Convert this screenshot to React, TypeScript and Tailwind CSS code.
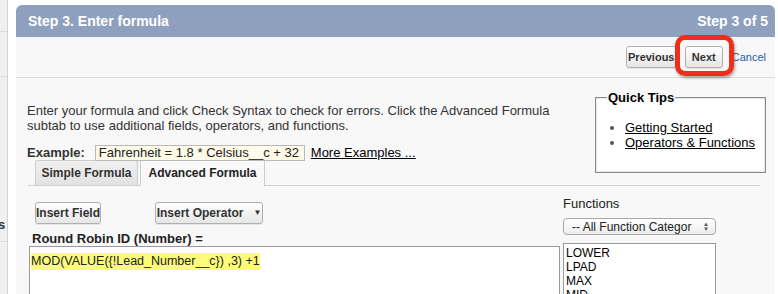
const FONT = "font-['Liberation_Sans',Arial,Helvetica,sans-serif]"

function LeftRail() {
  return (
    <div className="flex w-2 shrink-0 flex-col border-r border-[#d3d3d3] bg-[#f0f0f0]">
      <div className="h-[32px] border-b border-[#dcdcdc]" />
      <div className="h-[45px] border-b border-[#dcdcdc]" />
      <div className="flex h-[165px] flex-col justify-end overflow-hidden border-b border-[#dcdcdc] pb-[9px]">
        <span className="-ml-[2px] text-[13px] font-bold leading-[15px] text-[#333]">s</span>
      </div>
      <div className="flex-1" />
    </div>
  )
}

function Btn({ children, className = '' }: { children: React.ReactNode; className?: string }) {
  return (
    <button className={`flex h-[22px] items-center justify-center rounded-[3px] border border-[#b0b0b0] bg-gradient-to-b from-white to-[#e6e6e6] text-[11px] font-bold text-[#333] shadow-[0_1px_0_rgba(0,0,0,0.08)] ${className}`}>
      {children}
    </button>
  )
}

const FUNCTIONS = ['LOWER', 'LPAD', 'MAX', 'MID']

export default function App() {
  return (
    <div className={`flex h-[294px] w-[778px] overflow-hidden bg-white text-[#222] ${FONT}`}>
      <LeftRail />

      <div className="mr-[3px] ml-2 mt-[5px] flex min-w-0 flex-1 flex-col">
        {/* header */}
        <div className="flex h-8 shrink-0 items-center justify-between rounded-t-[6px] bg-[#8fa0bf] pl-3 pr-[7px] text-[14px] font-bold text-white">
          <span>Step 3. Enter formula</span>
          <span>Step 3 of 5</span>
        </div>

        <div className="flex-1 bg-[#f8f8f8]">
          {/* top buttons */}
          <div className="flex h-[41px] items-center justify-end border-b border-[#dcdcdc] pr-[9px]">
            <Btn className="w-[51px]">Previous</Btn>
            <div className="relative ml-[8px]">
              <Btn className="w-[38px]">Next</Btn>
              <div className="pointer-events-none absolute -top-[11px] -right-[11px] -bottom-[8px] -left-[10px] rounded-[10px] border-[5px] border-[#ee2d1a] shadow-[1px_2px_3px_rgba(0,0,0,0.35)]" />
            </div>
            <a className="ml-[9px] text-[11px] text-[#1c5ca8]">Cancel</a>
          </div>

          {/* intro + quick tips + tabs */}
          <div className="mr-[15px] ml-[12px] flex border-b border-[#cfcfcf] pt-[12px]">
            <div className="flex flex-1 flex-col">
              <p className="mt-[13px] -ml-px text-[13px] leading-[15px] text-[#333]">
                Enter your formula and click Check Syntax to check for errors. Click the Advanced Formula
                <br />
                subtab to use additional fields, operators, and functions.
              </p>
              <div className="relative z-10 mt-[12px] -ml-px flex h-[16px] items-center text-[13px]">
                <span className="font-bold text-[#333]">Example:</span>
                <span className="ml-[10px] flex h-[16px] w-[210px] items-center border border-[#b9b9b9] bg-[#fffbe8] pl-[3px] text-[#222]">
                  Fahrenheit = 1.8 * Celsius__c + 32
                </span>
                <a className="ml-[6px] text-black underline">More Examples ...</a>
              </div>
              <div className="mt-[-2px] ml-[7px] flex h-[26px] items-end gap-[2px]">
                <div className="flex h-[25px] w-[103px] items-center justify-center rounded-t-[3px] border border-b-0 border-[#cdcdcd] bg-gradient-to-b from-[#f0f0f0] to-[#e2e2e2] text-[12px] font-bold text-[#333]">
                  Simple Formula
                </div>
                <div className="-mb-px flex h-[27px] w-[125px] items-center justify-center rounded-t-[3px] border border-b-0 border-[#cdcdcd] bg-[#f8f8f8] text-[12px] font-bold text-[#222]">
                  Advanced Formula
                </div>
              </div>
            </div>

            <fieldset className="-mr-[6px] mb-[12px] h-[83px] w-[171px] shrink-0 self-start border border-[#8a8a8a] bg-white pr-[2px] pl-[12px] pt-[8px] shadow-[inset_0_0_0_1px_#e8e8e8]">
              <legend className="-ml-[1px] px-[1px] text-[13px] font-bold leading-[15px] text-black">Quick Tips</legend>
              <ul className="mt-[7px] list-disc whitespace-nowrap pl-[17px] text-[13px] leading-[15px] text-black marker:text-[#555]">
                <li><a className="underline">Getting Started</a></li>
                <li><a className="underline">Operators &amp; Functions</a></li>
              </ul>
            </fieldset>
          </div>

          {/* editor + functions */}
          <div className="ml-[13px] flex">
            <div className="w-[531px] shrink-0 pt-[16px]">
              <div className="flex items-center">
                <Btn className="ml-[6px] h-[21px] w-[66px] text-[12px]">Insert Field</Btn>
                <Btn className="ml-[54px] h-[21px] w-[108px] gap-[10px] text-[12px]">
                  Insert Operator <span className="text-[8px]">▼</span>
                </Btn>
              </div>
              <div className="mt-[7px] ml-[3px] text-[13px] font-bold leading-[15px] text-[#222]">Round Robin ID (Number) =</div>
              <div className="h-[60px] border border-[#9a9a9a] bg-white pt-px pl-px">
                <span className="inline-block bg-[#fdfc7a] text-[12.5px] leading-[17px] text-[#222]">MOD(VALUE({'{'}!Lead_Number__c{'}'}) ,3) +1</span>
              </div>
            </div>

            <div className="ml-[3px] w-[153px] shrink-0 pt-[10px]">
              <div className="text-[13px] leading-[15px] text-[#222]">Functions</div>
              <div className="mt-[7px] flex h-[17px] items-center justify-between overflow-hidden rounded-[4px] border border-[#a8a8a8] bg-gradient-to-b from-white to-[#ececec] pr-[6px] pl-[8px] text-[12px] text-[#222]">
                <span className="whitespace-nowrap">-- All Function Categor</span>
                <span className="flex flex-col text-[6px] leading-[5px] text-[#555]">
                  <span>▲</span>
                  <span>▼</span>
                </span>
              </div>
              <div className="mt-[8px] h-[60px] border border-[#9a9a9a] bg-white pt-[2px] pl-[2px] text-[12px] leading-[14px] text-black">
                {FUNCTIONS.map(f => (
                  <div key={f}>{f}</div>
                ))}
              </div>
            </div>
          </div>
        </div>
      </div>
    </div>
  )
}
